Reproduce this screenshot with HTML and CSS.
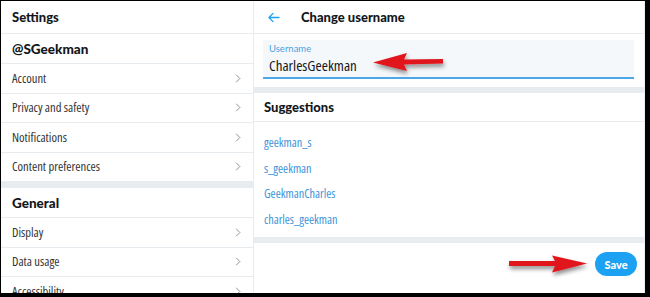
FILE: index.html
```html
<!DOCTYPE html>
<html>
<head>
	<meta charset="utf-8">
	<title>Change username</title>
	<link rel="stylesheet" href="styles.css">
</head>
<body>
	<div class="frame">
		<div class="sidebar">
			<div class="head">Settings</div>
			<div class="group">@SGeekman</div>
			<div class="row">Account<svg class="chev" viewBox="0 0 8 12"><polyline points="1.5,1 6.5,6 1.5,11"/></svg></div>
			<div class="row">Privacy and safety<svg class="chev" viewBox="0 0 8 12"><polyline points="1.5,1 6.5,6 1.5,11"/></svg></div>
			<div class="row">Notifications<svg class="chev" viewBox="0 0 8 12"><polyline points="1.5,1 6.5,6 1.5,11"/></svg></div>
			<div class="row">Content preferences<svg class="chev" viewBox="0 0 8 12"><polyline points="1.5,1 6.5,6 1.5,11"/></svg></div>
			<div class="band"></div>
			<div class="group">General</div>
			<div class="row">Display<svg class="chev" viewBox="0 0 8 12"><polyline points="1.5,1 6.5,6 1.5,11"/></svg></div>
			<div class="row">Data usage<svg class="chev" viewBox="0 0 8 12"><polyline points="1.5,1 6.5,6 1.5,11"/></svg></div>
			<div class="row">Accessibility<svg class="chev" viewBox="0 0 8 12"><polyline points="1.5,1 6.5,6 1.5,11"/></svg></div>
		</div>
		<div class="main">
			<div class="head main-head">
				<svg class="back" viewBox="0 0 14 12"><path d="M13 6H2M6.5 1.5L2 6l4.5 4.5"/></svg>
				<span>Change username</span>
			</div>
			<div class="field-wrap">
				<div class="field">
					<label>Username</label>
					<div class="value">CharlesGeekman</div>
				</div>
			</div>
			<div class="band"></div>
			<div class="sugg-head">Suggestions</div>
			<ul class="sugg">
				<li>geekman_s</li>
				<li>s_geekman</li>
				<li>GeekmanCharles</li>
				<li>charles_geekman</li>
			</ul>
			<div class="band"></div>
			<div class="foot">
				<button class="save">Save</button>
			</div>
		</div>
		<svg class="arrows" viewBox="0 0 650 297">
			<defs>
				<filter id="sh" x="-20%" y="-50%" width="140%" height="200%">
					<feDropShadow dx="1" dy="3" stdDeviation="2" flood-color="#000" flood-opacity="0.45"/>
				</filter>
			</defs>
			<g fill="#e0141c" filter="url(#sh)">
				<polygon points="373,62.5 407,53 404,59.5 443,59 443,63.5 404,64.5 407,71"/>
				<polygon points="587,263.5 552,255.5 555,261 509,261 509,266 555,266 552,272.5"/>
			</g>
		</svg>
	</div>
</body>
</html>
```

FILE: styles.css
```css
body{margin: 0;background-color: #000;font-family: Lato, 'Open Sans', sans-serif;color: #14171a;}
.frame{position: relative;width: 650px;height: 297px;box-sizing: border-box;border-style: solid;border-color: #000;border-width: 1px 5px 4px 1px;background-color: #fff;display: grid;grid-template-columns: 253px 1fr;overflow: hidden;}
.sidebar{border-right: 1px solid #e6ecf0;overflow: hidden;}
.main{border-right: 1px solid #e6ecf0;overflow: hidden;}
.head{height: 32px;border-bottom: 1px solid #e6ecf0;display: flex;align-items: center;padding-left: 11px;font-size: 13px;font-weight: 900;}
.group{height: 29px;border-bottom: 1px solid #e6ecf0;display: flex;align-items: center;padding-left: 11px;font-size: 13.5px;font-weight: 900;}
.row{height: 28.5px;border-bottom: 1px solid #e6ecf0;display: flex;align-items: center;justify-content: space-between;padding: 0 12px 0 11px;font-family: 'Open Sans', sans-serif;font-stretch: 75%;font-size: 12.6px;color: #333;}
.chev{width: 6px;height: 9px;fill: none;stroke: #7b8893;stroke-width: 1.2;}
.band{height: 6px;background-color: #e6ecf0;}
.main-head{padding-left: 13px;gap: 21px;font-size: 13px;}
.back{width: 13px;height: 11px;fill: none;stroke: #1da1f2;stroke-width: 1.4;stroke-linecap: round;stroke-linejoin: round;}
.field-wrap{padding: 6px 10px 8px 9px;}
.field{height: 34px;background-color: #f5f8fa;border-bottom: 2px solid #4aa8e8;padding: 3px 6px 0 6px;box-sizing: content-box;}
.field label{display: block;font-size: 9.5px;color: #4aa2e0;line-height: 12px;}
.value{font-family: 'Open Sans', sans-serif;font-stretch: 75%;font-size: 15px;line-height: 18px;margin-top: 1px;}
.sugg-head{height: 28px;border-bottom: 1px solid #e6ecf0;display: flex;align-items: center;padding-left: 10px;font-size: 13px;font-weight: 900;}
.sugg{list-style: none;margin: 0;padding: 8px 0 5px 10px;}
.sugg li{height: 25.5px;line-height: 25.5px;font-family: 'Open Sans', sans-serif;font-stretch: 75%;font-size: 12.2px;color: #3b94d9;}
.foot{display: flex;justify-content: flex-end;padding: 9px 7px 0 0;}
.save{border: none;background-color: #1da1f2;color: #fff;font-family: inherit;font-weight: 900;font-size: 11px;width: 42px;height: 24px;border-radius: 12px;padding: 0;}
.arrows{position: absolute;top: -1px;left: -1px;width: 650px;height: 297px;pointer-events: none;}
```
